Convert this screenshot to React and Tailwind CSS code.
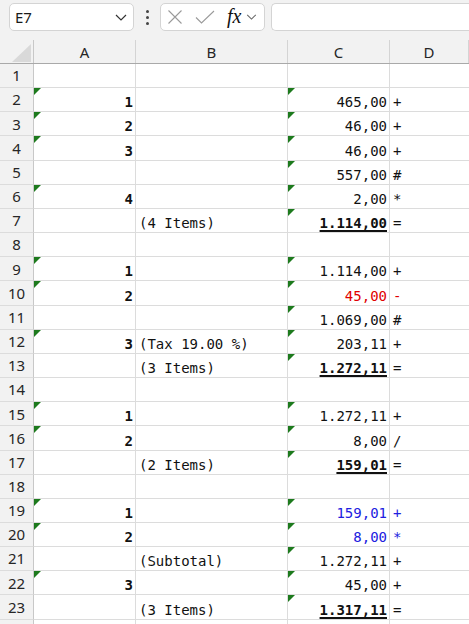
import React from "react"

const mono = "font-['DejaVu_Sans_Mono','Liberation_Mono',monospace]"
const ui = "font-['Noto_Sans','Open_Sans',sans-serif]"

// sheet contents, one entry per row
const rows = [
    { n: 1 },
    { n: 2, a: "1", c: "465,00", d: "+" },
    { n: 3, a: "2", c: "46,00", d: "+" },
    { n: 4, a: "3", c: "46,00", d: "+" },
    { n: 5, c: "557,00", d: "#" },
    { n: 6, a: "4", c: "2,00", d: "*" },
    { n: 7, b: "(4 Items)", c: "1.114,00", d: "=", total: true },
    { n: 8 },
    { n: 9, a: "1", c: "1.114,00", d: "+" },
    { n: 10, a: "2", c: "45,00", d: "-", tone: "red" },
    { n: 11, c: "1.069,00", d: "#" },
    { n: 12, a: "3", b: "(Tax 19.00 %)", c: "203,11", d: "+" },
    { n: 13, b: "(3 Items)", c: "1.272,11", d: "=", total: true },
    { n: 14 },
    { n: 15, a: "1", c: "1.272,11", d: "+" },
    { n: 16, a: "2", c: "8,00", d: "/" },
    { n: 17, b: "(2 Items)", c: "159,01", d: "=", total: true },
    { n: 18 },
    { n: 19, a: "1", c: "159,01", d: "+", tone: "blue" },
    { n: 20, a: "2", c: "8,00", d: "*", tone: "blue" },
    { n: 21, b: "(Subtotal)", c: "1.272,11", d: "+" },
    { n: 22, a: "3", c: "45,00", d: "+" },
    { n: 23, b: "(3 Items)", c: "1.317,11", d: "=", total: true },
    // only the top edge of the next row shows, label stays hidden
    { n: 24, hideLabel: true },
]

const toneClass = {
    red: "text-[#e00000]",
    blue: "text-[#2020e0]",
}

function Flag() {
    return (
        <span className="absolute top-0 left-0 w-0 h-0 border-t-[7px] border-r-[7px] border-t-[#1d7a1d] border-r-transparent" />
    )
}

function Chevron({ className }) {
    return (
        <svg className={className} viewBox="0 0 12 7" fill="none">
            <path d="M1 1l5 5 5-5" stroke="currentColor" strokeWidth="1.2" />
        </svg>
    )
}

function Toolbar() {
    return (
        <div className="h-[40px] shrink-0 flex items-start pt-[3px] pl-[9px] gap-0">
            <div className="w-[125px] h-[28px] rounded-[5px] border border-[#d4d4d4] bg-white flex items-center pl-[5px] pr-[6px]">
                <span className={`${ui} text-[15px] text-[#1a1a1a] flex-1`}>E7</span>
                <Chevron className="w-[12px] h-[7px] text-[#333]" />
            </div>
            <div className="w-[26px] h-[28px] flex flex-col items-center justify-center gap-[3px]">
                <span className="w-[3px] h-[3px] rounded-full bg-[#444]" />
                <span className="w-[3px] h-[3px] rounded-full bg-[#444]" />
                <span className="w-[3px] h-[3px] rounded-full bg-[#444]" />
            </div>
            <div className="w-[105px] h-[28px] rounded-[5px] border border-[#d4d4d4] bg-white flex items-center pl-[6px]">
                <svg className="w-[16px] h-[16px]" viewBox="0 0 16 16" fill="none">
                    <path d="M1.5 1.5l13 13M14.5 1.5l-13 13" stroke="#9a9a9a" strokeWidth="1.1" />
                </svg>
                <svg className="w-[20px] h-[14px] ml-[12px]" viewBox="0 0 20 14" fill="none">
                    <path d="M1 7.5l5.5 5.5L19 1" stroke="#9a9a9a" strokeWidth="1.1" />
                </svg>
                <span className="ml-[12px] font-['Liberation_Serif','DejaVu_Serif',serif] italic text-[20px] leading-none text-[#111] -mt-[2px]">
                    fx
                </span>
                <Chevron className="w-[11px] h-[6px] ml-[5px] text-[#666]" />
            </div>
            <div className="ml-[6px] flex-1 h-[28px] rounded-l-[5px] border border-r-0 border-[#d4d4d4] bg-white" />
        </div>
    )
}

function ColumnHeader() {
    const cols = [
        { label: "A", w: "w-[102px]" },
        { label: "B", w: "w-[152px]" },
        { label: "C", w: "w-[102px]" },
        { label: "D", w: "flex-1" },
    ]
    return (
        <div className="flex h-[24px] shrink-0 border-b border-[#a9a9a9]">
            <div className="w-[34px] border-r border-[#c8c8c8] flex items-end justify-end pr-[2px] pb-[1px]">
                <svg className="w-[19px] h-[18px]" viewBox="0 0 19 18">
                    <path d="M19 0V18H0z" fill="#d9d9d9" />
                </svg>
            </div>
            {cols.map((c) => (
                <div
                    key={c.label}
                    className={`${c.w} border-r border-[#d4d4d4] flex items-center justify-center ${ui} text-[15px] text-[#262626] pt-[1px]`}
                >
                    {c.label}
                </div>
            ))}
        </div>
    )
}

function SheetRow({ row }) {
    const tone = row.tone ? toneClass[row.tone] : "text-[#111]"
    return (
        <div className="flex h-[24.17px] shrink-0">
            <div
                className={`w-[34px] border-r border-b border-r-[#c8c8c8] border-b-[#dcdcdc] bg-[#f2f2f2] flex items-center justify-center ${ui} text-[15px] text-[#262626]`}
            >
                {!row.hideLabel && row.n}
            </div>
            <div className="relative w-[102px] border-r border-b border-[#dcdcdc] bg-white flex items-end justify-end pr-[2px]">
                {row.a && <Flag />}
                <span className={`${mono} text-[14px] leading-[18px] font-bold text-[#111]`}>
                    {row.a}
                </span>
            </div>
            <div className="w-[152px] border-r border-b border-[#dcdcdc] bg-white flex items-end pl-[3px]">
                <span className={`${mono} text-[14px] leading-[18px] text-[#111] whitespace-pre`}>
                    {row.b}
                </span>
            </div>
            <div className="relative w-[102px] border-r border-b border-[#dcdcdc] bg-white flex items-end justify-end pr-[2px]">
                {row.c && <Flag />}
                <span
                    className={`${mono} text-[14px] leading-[18px] ${tone} ${
                        row.total
                            ? "font-bold underline decoration-[1.5px] underline-offset-[2px]"
                            : ""
                    }`}
                >
                    {row.c}
                </span>
            </div>
            <div className="flex-1 border-b border-[#dcdcdc] bg-white flex items-end pl-[3px]">
                <span className={`${mono} text-[14px] leading-[18px] ${tone}`}>{row.d}</span>
            </div>
        </div>
    )
}

export default function App() {
    return (
        <div className="w-[469px] h-[624px] overflow-hidden bg-[#f2f2f2] flex flex-col">
            <Toolbar />
            <ColumnHeader />
            {rows.map((r) => (
                <SheetRow key={r.n} row={r} />
            ))}
        </div>
    )
}
